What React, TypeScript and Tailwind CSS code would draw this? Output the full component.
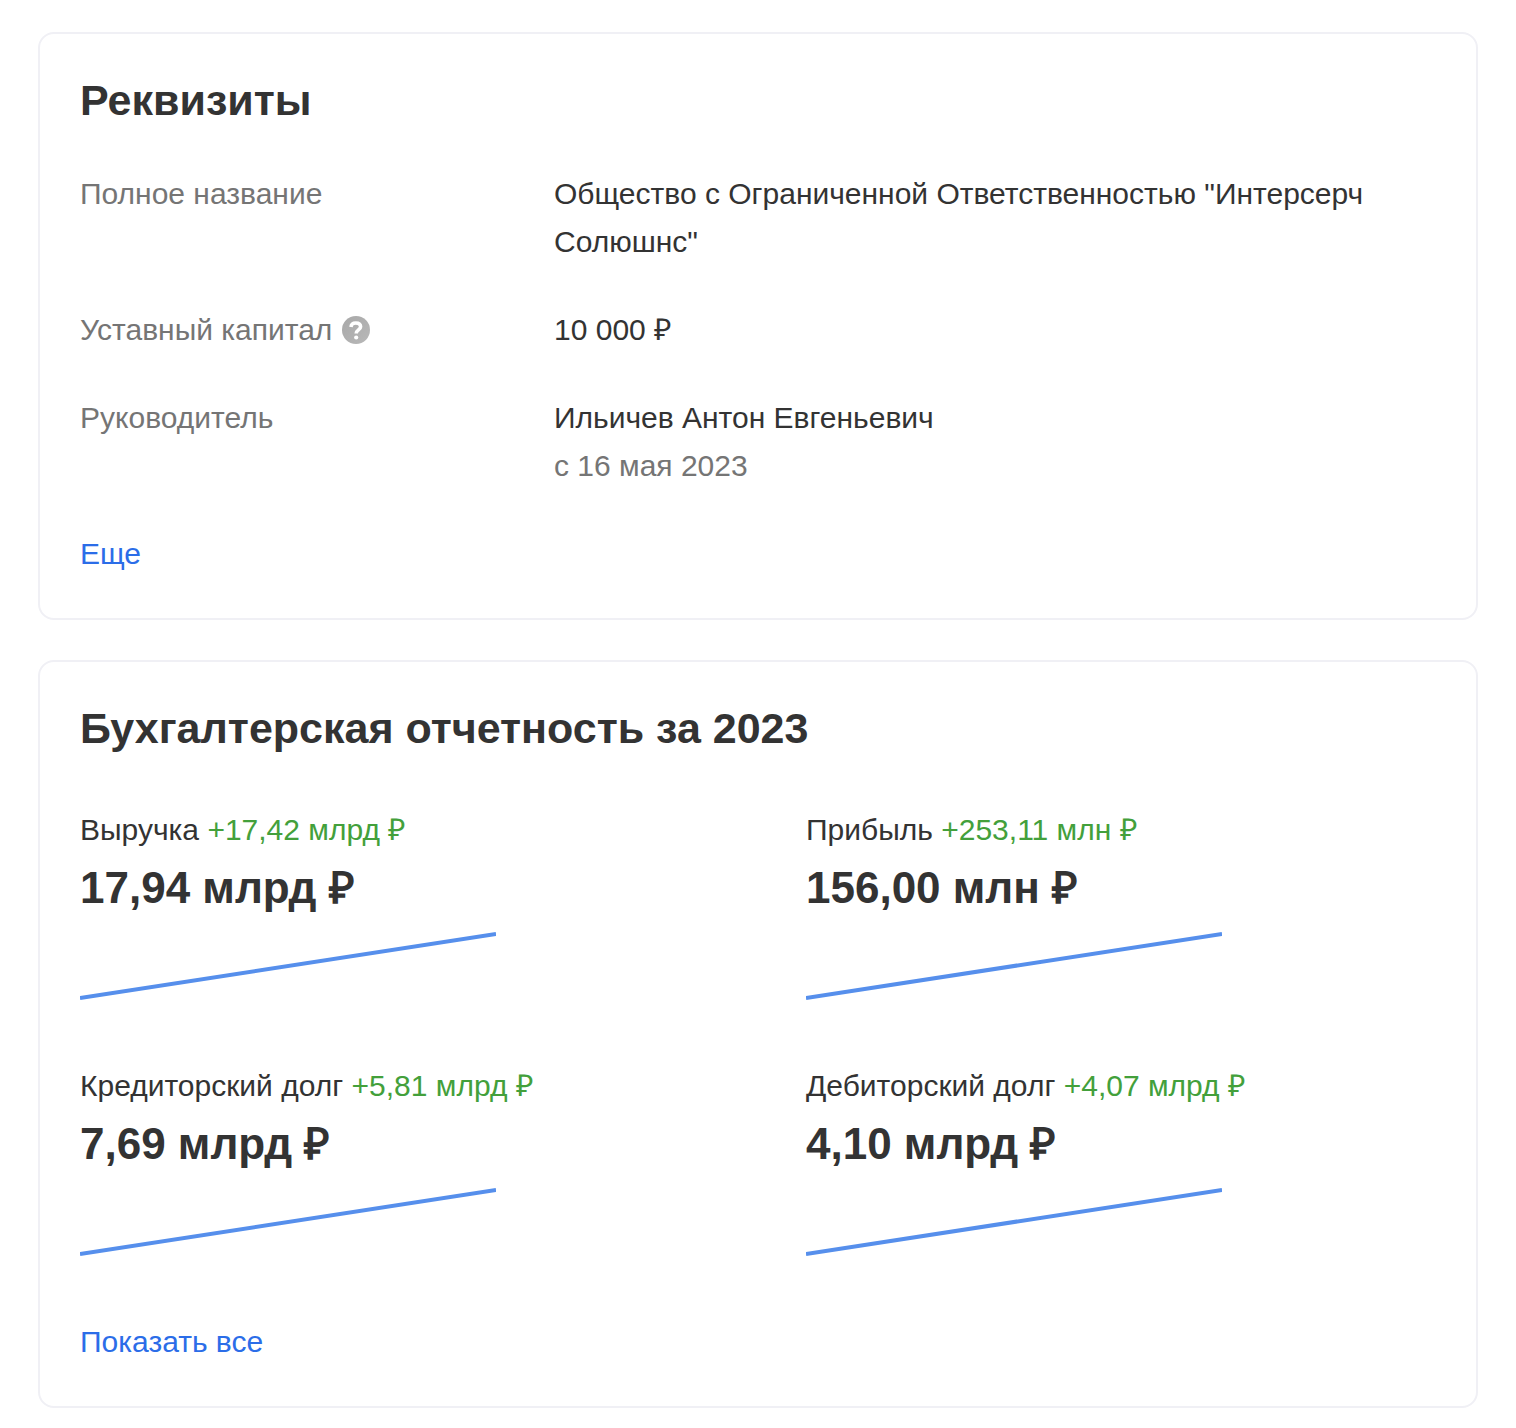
import React from "react";

const details = [
  { label: "Полное название", value: 'Общество с Ограниченной Ответственностью "Интерсерч Солюшнс"' },
  { label: "Уставный капитал", value: "10 000 ₽", help: true },
  { label: "Руководитель", value: "Ильичев Антон Евгеньевич", note: "с 16 мая 2023" },
];

const metrics = [
  { label: "Выручка", delta: "+17,42 млрд ₽", value: "17,94 млрд ₽" },
  { label: "Прибыль", delta: "+253,11 млн ₽", value: "156,00 млн ₽" },
  { label: "Кредиторский долг", delta: "+5,81 млрд ₽", value: "7,69 млрд ₽" },
  { label: "Дебиторский долг", delta: "+4,07 млрд ₽", value: "4,10 млрд ₽" },
];

function Card({ title, children }: { title: string; children: React.ReactNode }) {
  return (
    <section className="rounded-2xl border-2 border-[#f0f0f5] p-10">
      <h2 className="text-[43px] leading-[52px] font-bold">{title}</h2>
      {children}
    </section>
  );
}

function HelpButton() {
  return (
    <button type="button" aria-label="Что такое уставный капитал" className="ml-2 flex size-8 items-center justify-center">
      <svg viewBox="0 0 28 28" className="size-7" aria-hidden="true">
        <defs>
          <linearGradient id="help-fill" x1="0" y1="0" x2="1" y2="1">
            <stop offset="0" stopColor="#a8a8a8" />
            <stop offset="1" stopColor="#b8b8b8" />
          </linearGradient>
        </defs>
        <circle cx="14" cy="14" r="14" fill="url(#help-fill)" />
        <path d="M9 11C9.200 8.400 11 7 13.800 7c2.800 0 4.800 1.300 4.800 3.800 0 3.200-4.400 3.100-4.400 6.700" fill="none" stroke="#fff" strokeWidth="3.600" />
        <circle cx="14.200" cy="21.500" r="2.100" fill="#fff" />
      </svg>
    </button>
  );
}

export default function App() {
  return (
    <main className="flex flex-col gap-10 bg-white px-[38px] pt-8 pb-5 font-['Liberation_Sans',Arial,sans-serif] text-[30px] leading-[48px] text-[#333]">
      <Card title="Реквизиты">
        <dl className="mt-11 flex flex-col gap-10">
          {details.map((d) => (
            <div key={d.label} className="grid grid-cols-[474px_1fr]">
              <dt className="flex h-12 items-center text-[#757575]">
                {d.label}
                {d.help && <HelpButton />}
              </dt>
              <dd>
                {d.value}
                {d.note && <div className="text-[#757575]">{d.note}</div>}
              </dd>
            </div>
          ))}
        </dl>
        <button type="button" className="mt-10 block cursor-pointer text-[#2b6de8]">Еще</button>
      </Card>
      <Card title="Бухгалтерская отчетность за 2023">
        <div className="mt-[52px] grid grid-cols-2 gap-x-24 gap-y-[60px]">
          {metrics.map((m) => (
            <div key={m.label}>
              <div>
                {m.label} <span className="text-[#43a03b]">{m.delta}</span>
              </div>
              <div className="mt-2 text-[44px] leading-[52px] font-bold">{m.value}</div>
              <svg viewBox="0 0 416 72" className="mt-4 h-[72px] w-[416px]" aria-hidden="true">
                <path d="M0 68L416 4" stroke="#568fec" strokeWidth="4" />
              </svg>
            </div>
          ))}
        </div>
        <button type="button" className="mt-[60px] block cursor-pointer text-[#2b6de8]">Показать все</button>
      </Card>
    </main>
  );
}
